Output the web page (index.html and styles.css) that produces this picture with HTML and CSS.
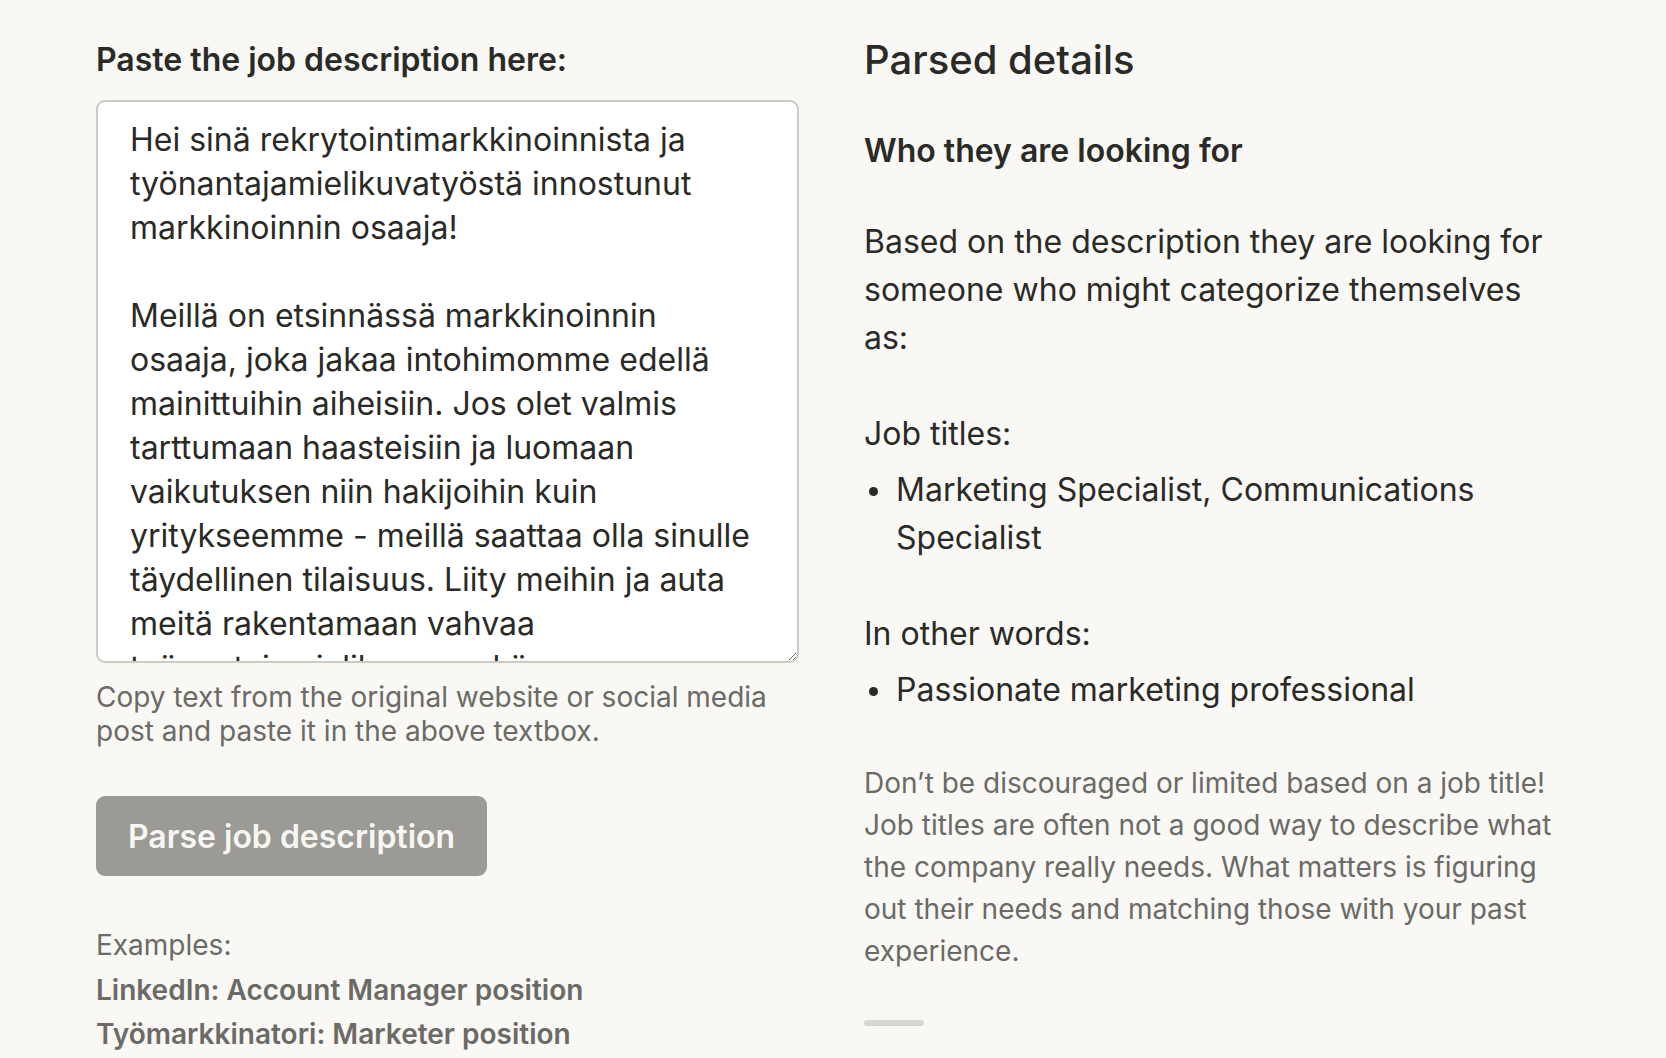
FILE: index.html
```html
<!DOCTYPE html>
<html lang="en">
<head>
<meta charset="utf-8">
<title>Job description parser</title>
<link rel="stylesheet" href="styles.css">
</head>
<body>
<main class="page">
  <section class="col col-input">
    <label class="field-label" for="jd">Paste the job description here:</label>
    <textarea id="jd" class="jd-input">Hei sinä rekrytointimarkkinoinnista ja työnantajamielikuvatyöstä innostunut markkinoinnin osaaja!

Meillä on etsinnässä markkinoinnin osaaja, joka jakaa intohimomme edellä mainittuihin aiheisiin. Jos olet valmis tarttumaan haasteisiin ja luomaan vaikutuksen niin hakijoihin kuin yritykseemme - meillä saattaa olla sinulle täydellinen tilaisuus. Liity meihin ja auta meitä rakentamaan vahvaa työnantajamielikuvaa sekä rekrytointimarkkinointia, joka erottuu joukosta.</textarea>
    <p class="hint">Copy text from the original website or social media post and paste it in the above textbox.</p>
    <button class="btn-parse" type="button">Parse job description</button>
    <div class="examples">
      <div class="examples-title">Examples:</div>
      <a class="example-link" href="#">LinkedIn: Account Manager position</a>
      <a class="example-link" href="#">Työmarkkinatori: Marketer position</a>
    </div>
  </section>
  <section class="col col-output">
    <h1 class="out-title">Parsed details</h1>
    <h2 class="out-subtitle">Who they are looking for</h2>
    <p class="out-text">Based on the description they are looking for someone who might categorize themselves as:</p>
    <p class="out-text out-gap">Job titles:</p>
    <ul class="bullets">
      <li>Marketing Specialist, Communications Specialist</li>
    </ul>
    <p class="out-text out-gap">In other words:</p>
    <ul class="bullets">
      <li>Passionate marketing professional</li>
    </ul>
    <p class="note">Don’t be discouraged or limited based on a job title! Job titles are often not a good way to describe what the company really needs. What matters is figuring out their needs and matching those with your past experience.</p>
    <div class="divider"></div>
  </section>
</main>
</body>
</html>
```

FILE: styles.css
```css
* { box-sizing: border-box; }

html, body {
  margin: 0;
  padding: 0;
  background: #f9f8f5;
  color: #2a2a26;
  font-family: "Inter", "Noto Sans", sans-serif;
  height: 100%;
  overflow: hidden;
}

.page {
  display: grid;
  grid-template-columns: 703px 1fr;
  column-gap: 65px;
  padding: 36px 100px 0 96px;
}

.col {
  display: flex;
  flex-direction: column;
  align-items: flex-start;
  min-width: 0;
}

.field-label {
  font-size: 32px;
  line-height: 45px;
  font-weight: 600;
  margin-top: 1px;
  color: #2a2a26;
}

.jd-input {
  margin-top: 18px;
  width: 703px;
  height: 563px;
  background: #ffffff;
  border: 2px solid #cbcac3;
  border-radius: 9px;
  padding: 16px 32px 0 32px;
  font-family: "Inter", "Noto Sans", sans-serif;
  font-size: 32px;
  line-height: 44px;
  color: #2a2a26;
  overflow: hidden;
  resize: vertical;
  outline: none;
}

.hint {
  margin: 17px 0 0 0;
  font-size: 28px;
  line-height: 34px;
  color: #6b6a64;
}

.btn-parse {
  margin-top: 48px;
  height: 80px;
  padding: 0 32px;
  border: none;
  border-radius: 9px;
  background: #9b9a95;
  color: #f7f6f2;
  font-family: "Inter", "Noto Sans", sans-serif;
  font-size: 32px;
  font-weight: 600;
}

.examples {
  margin-top: 47px;
  display: flex;
  flex-direction: column;
  font-size: 28px;
  line-height: 44px;
  color: #6b6a64;
}

.examples-title {
  margin-bottom: 1px;
}

.example-link {
  color: #6b6a64;
  font-weight: 600;
  text-decoration: none;
}

.out-title {
  margin: 0;
  font-size: 40px;
  line-height: 48px;
  font-weight: 500;
}

.out-subtitle {
  margin: 44px 0 0 0;
  font-size: 32px;
  line-height: 45px;
  font-weight: 600;
}

.out-text {
  margin: 45px 0 0 0;
  font-size: 32px;
  line-height: 48px;
}

.out-gap { margin-top: 48px; }

.bullets {
  list-style: none;
  margin: 8px 0 0 0;
  padding: 0;
  font-size: 32px;
  line-height: 48px;
}

.bullets li {
  display: grid;
  grid-template-columns: 32px 1fr;
}

.bullets li::before {
  content: "";
  width: 9px;
  height: 9px;
  border-radius: 50%;
  background: #2a2a26;
  margin: 21px 0 0 5px;
}

.note {
  margin: 48px 0 0 0;
  font-size: 28px;
  line-height: 42px;
  color: #6b6a64;
}

.divider {
  margin-top: 48px;
  width: 60px;
  height: 6px;
  border-radius: 3px;
  background: #d7d6cf;
}
```
